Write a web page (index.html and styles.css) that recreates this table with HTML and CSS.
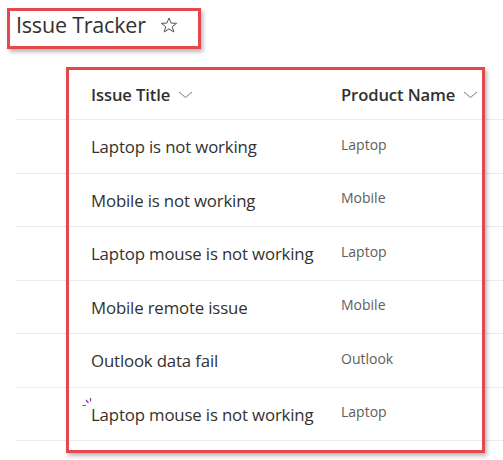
FILE: index.html
```html
<!DOCTYPE html>
<html>
<head>
<meta charset="utf-8">
<link rel="stylesheet" href="styles.css">
</head>
<body>
<div class="page">
  <div class="title-bar">
    <span class="title">Issue Tracker</span>
    <svg class="star" width="18" height="16" viewBox="0 0 18 16"><path d="M9 1 L11.1 6.1 L16.6 6.3 L12.3 9.7 L13.8 15 L9 11.9 L4.2 15 L5.7 9.7 L1.4 6.3 L6.9 6.1 Z" fill="none" stroke="#555" stroke-width="1"/></svg>
  </div>
  <div class="list">
    <div class="row head">
      <div class="c1"><span class="htext">Issue Title</span><svg class="chev" width="15" height="8" viewBox="0 0 15 8"><path d="M1 1 L7.5 6.5 L14 1" fill="none" stroke="#7a7876" stroke-width="1"/></svg></div>
      <div class="c2"><span class="htext">Product Name</span><svg class="chev" width="15" height="8" viewBox="0 0 15 8"><path d="M1 1 L7.5 6.5 L14 1" fill="none" stroke="#7a7876" stroke-width="1"/></svg></div>
    </div>
    <div class="row"><div class="c1 t">Laptop is not working</div><div class="c2 p">Laptop</div></div>
    <div class="row"><div class="c1 t">Mobile is not working</div><div class="c2 p">Mobile</div></div>
    <div class="row"><div class="c1 t">Laptop mouse is not working</div><div class="c2 p">Laptop</div></div>
    <div class="row"><div class="c1 t">Mobile remote issue</div><div class="c2 p">Mobile</div></div>
    <div class="row"><div class="c1 t">Outlook data fail</div><div class="c2 p">Outlook</div></div>
    <div class="row"><div class="c1 t new"><svg class="spark" width="12" height="11" viewBox="0 0 12 11"><path d="M0.5 9.5 L4 9.5 M4 4 L6.5 7 M8.5 2 L8.5 5.5" fill="none" stroke="#8a3aa8" stroke-width="1.2"/></svg>Laptop mouse is not working</div><div class="c2 p">Laptop</div></div>
    <div class="annot"></div>
  </div>
</div>
</body>
</html>
```

FILE: styles.css
```css
html, body {
  margin: 0;
  padding: 0;
  background: #ffffff;
}
body {
  font-family: "Open Sans", "Noto Sans", sans-serif;
  color: #323130;
  width: 503px;
  height: 460px;
  overflow: hidden;
}
.page {
  padding-top: 8px;
}
.title-bar {
  margin-left: 7px;
  width: 182px;
  height: 27px;
  border: 3px solid #e5484c;
  box-shadow: 2px 3px 4px rgba(0,0,0,0.28);
  display: flex;
  align-items: center;
  padding-left: 6px;
  padding-bottom: 8px;
  box-sizing: content-box;
}
.title {
  font-size: 21.5px;
  letter-spacing: -0.2px;
  color: #323130;
}
.star {
  margin-left: 14px;
  margin-top: 1px;
}
.list {
  position: relative;
  margin-top: 21px;
  margin-left: 16px;
}
.row {
  display: flex;
  align-items: center;
  height: 52.5px;
  border-bottom: 1px solid #edebe9;
}
.row.head {
  height: 49px;
}
.c1 {
  width: 325px;
  padding-left: 75px;
  box-sizing: border-box;
  display: flex;
  align-items: center;
  position: relative;
  flex-shrink: 0;
}
.c2 {
  display: flex;
  align-items: center;
}
.htext {
  font-size: 16.6px;
  font-weight: 600;
  letter-spacing: -0.1px;
  color: #323130;
}
.chev {
  margin-left: 8px;
  margin-top: 1px;
}
.t {
  font-size: 16.8px;
  letter-spacing: -0.15px;
  color: #323130;
  padding-top: 1px;
}
.p {
  font-size: 14px;
  color: #605e5c;
  padding-bottom: 4px;
}
.spark {
  position: absolute;
  left: 66px;
  top: -6px;
}
.annot {
  position: absolute;
  left: 50px;
  top: -3px;
  width: 413px;
  height: 380px;
  border: 3px solid #e5484c;
  box-shadow: 2px 3px 4px rgba(0,0,0,0.28);
  pointer-events: none;
}
```
